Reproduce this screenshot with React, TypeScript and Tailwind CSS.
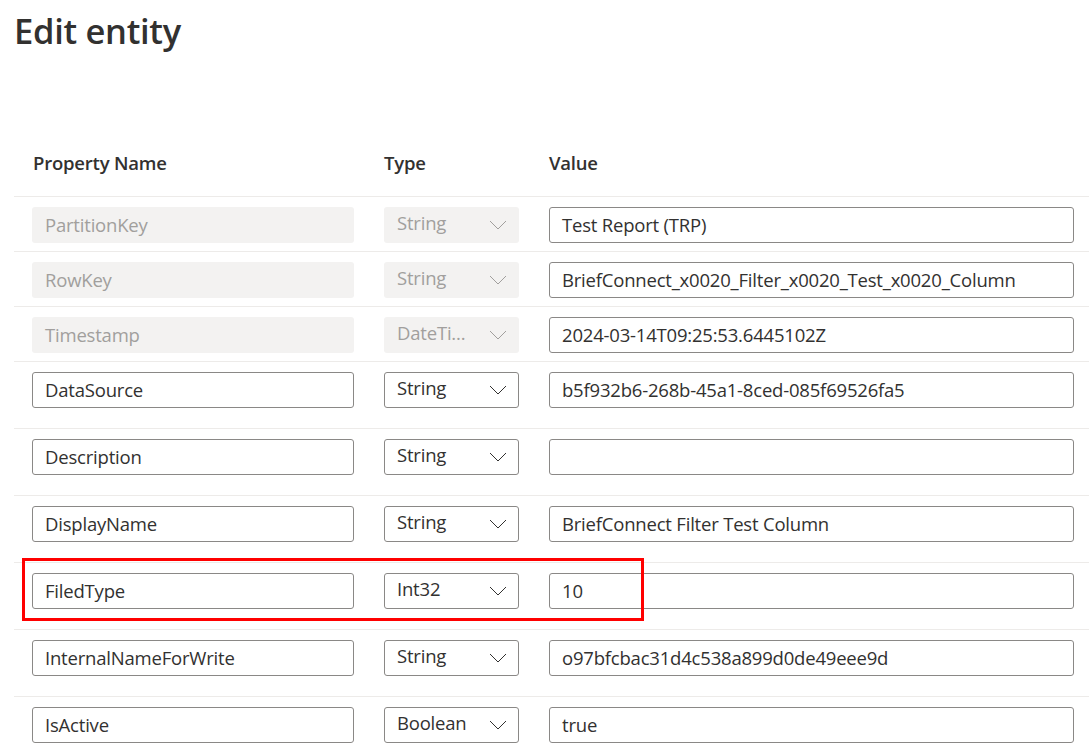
import React from "react";

type Row = { name: string; type: string; value: string; disabled?: boolean; highlight?: boolean };

const rows: Row[] = [
  { name: "PartitionKey", type: "String", value: "Test Report (TRP)", disabled: true },
  { name: "RowKey", type: "String", value: "BriefConnect_x0020_Filter_x0020_Test_x0020_Column", disabled: true },
  { name: "Timestamp", type: "DateTi...", value: "2024-03-14T09:25:53.6445102Z", disabled: true },
  { name: "DataSource", type: "String", value: "b5f932b6-268b-45a1-8ced-085f69526fa5" },
  { name: "Description", type: "String", value: "" },
  { name: "DisplayName", type: "String", value: "BriefConnect Filter Test Column" },
  { name: "FiledType", type: "Int32", value: "10", highlight: true },
  { name: "InternalNameForWrite", type: "String", value: "o97bfcbac31d4c538a899d0de49eee9d" },
  { name: "IsActive", type: "Boolean", value: "true" },
];

function Chevron({ disabled }: { disabled?: boolean }) {
  return (
    <svg width="18" height="10" viewBox="0 0 18 10" fill="none" className="shrink-0">
      <path d="M1 1 L9 9 L17 1" stroke={disabled ? "#a19f9d" : "#323130"} strokeWidth="1" />
    </svg>
  );
}

function NameInput({ row }: { row: Row }) {
  return row.disabled ? (
    <div className="w-[322px] h-[36px] rounded-[3px] bg-[#f3f2f1] flex items-center pl-[13px] text-[#a19f9d]">
      {row.name}
    </div>
  ) : (
    <div className="w-[322px] h-[36px] rounded-[3px] border border-[#8a8886] flex items-center pl-[12px] text-[#323130]">
      {row.name}
    </div>
  );
}

function TypeSelect({ row }: { row: Row }) {
  return row.disabled ? (
    <div className="w-[135px] h-[36px] rounded-[3px] bg-[#f3f2f1] flex items-center justify-between pl-[13px] pr-[12px] text-[#a19f9d]">
      <span className="whitespace-nowrap -mt-[4px]">{row.type}</span>
      <Chevron disabled />
    </div>
  ) : (
    <div className="w-[135px] h-[36px] rounded-[3px] border border-[#8a8886] flex items-center justify-between pl-[12px] pr-[11px] text-[#323130]">
      <span className="whitespace-nowrap -mt-[4px]">{row.type}</span>
      <Chevron />
    </div>
  );
}

function ValueInput({ row }: { row: Row }) {
  return (
    <div className="w-[525px] h-[36px] rounded-[3px] border border-[#8a8886] flex items-center pl-[12px] text-[#323130] whitespace-nowrap overflow-hidden">
      {row.value}
    </div>
  );
}

export default function App() {
  return (
    <div
      className="w-[1089px] h-[756px] overflow-hidden bg-white text-[#323130] pl-[14px]"
      style={{ fontFamily: '"Open Sans", "Noto Sans", sans-serif' }}
    >
      <h1 className="text-[34.5px] font-semibold leading-none pt-[14px] h-[130px] tracking-[-0.3px]">Edit entity</h1>
      <div className="text-[18.5px] tracking-[-0.2px]">
        <div className="flex items-center h-[66px] pl-[19px] font-semibold text-[18.5px]">
          <div className="w-[351px]">Property Name</div>
          <div className="w-[165px]">Type</div>
          <div>Value</div>
        </div>
        {rows.map((row) => (
          <div
            key={row.name}
            className={`relative border-t border-[#edebe9] pl-[18px] pt-[10px] flex items-start gap-[30px] ${
              row.disabled ? "h-[55px]" : "h-[67px]"
            }`}
          >
            {row.highlight && (
              <div className="absolute left-[8px] top-[-5px] w-[622px] h-[63px] border-[3px] border-[#ff0000] pointer-events-none" />
            )}
            <NameInput row={row} />
            <TypeSelect row={row} />
            <ValueInput row={row} />
          </div>
        ))}
      </div>
    </div>
  );
}
